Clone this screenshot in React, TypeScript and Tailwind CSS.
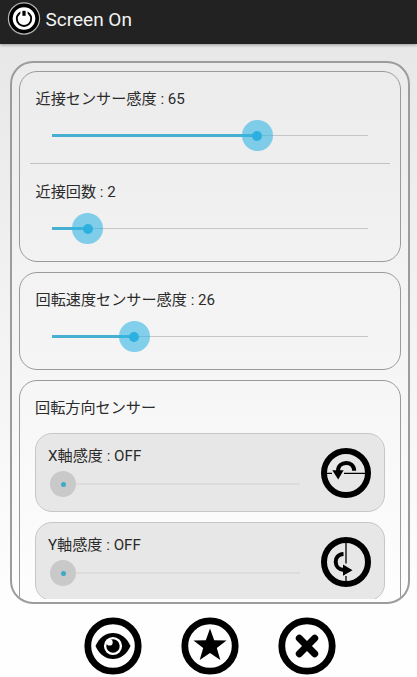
import type { ReactNode } from "react";

const Slider = ({ percent }: { percent: number }) => {
  return (
    <div className="relative ml-[32px] mr-[32px] h-[31px]">
      <div className="absolute top-[15px] h-px w-full bg-[#c6c6c6]" />
      <div
        className="absolute top-[14px] h-[3px] bg-[#45b0d2]"
        style={{ width: `${percent}%` }}
      />
      <div
        className="absolute top-0 -ml-[15.5px] flex h-[31px] w-[31px] items-center justify-center rounded-full bg-[#33b5e5]/60"
        style={{ left: `${percent}%` }}
      >
        <div className="h-[10px] w-[10px] rounded-full bg-[#2cb0e0]" />
      </div>
    </div>
  );
};

const DisabledSlider = () => {
  return (
    <div className="mt-[4px] flex h-[26px] w-[252px] items-center">
      <div className="ml-[2px] flex h-[26px] w-[26px] items-center justify-center rounded-full bg-[#c9c9c9]">
        <div className="h-[5px] w-[5px] rounded-full bg-[#3fa9c6]" />
      </div>
      <div className="h-[2px] flex-1 bg-[#dcdcdc]" />
    </div>
  );
};

const Label = ({ children }: { children: ReactNode }) => {
  return (
    <p className="h-[22px] whitespace-nowrap text-[15.15px] leading-[22px] text-[#2b2b2b]">
      {children}
    </p>
  );
};

const AxisRow = ({ label, icon }: { label: string; icon: ReactNode }) => {
  return (
    <div className="flex h-[79px] shrink-0 items-center justify-between rounded-[17px] border border-[#c6c6c6] bg-[#e7e7e7] pl-[12px] pr-[13px]">
      <div className="h-full pt-[11px]">
        <Label>{label}</Label>
        <DisabledSlider />
      </div>
      {icon}
    </div>
  );
};

const PowerIcon = () => (
  <svg width="34" height="34" viewBox="0 0 34 34" fill="none">
    <circle cx="17" cy="16.5" r="15.6" fill="#000" stroke="#b5b5b5" strokeWidth="1.2" />
    <circle cx="17" cy="16.5" r="11.3" fill="#fff" />
    <circle cx="17" cy="16.8" r="7.2" stroke="#000" strokeWidth="1.9" />
    <rect x="13.4" y="8" width="7.2" height="5.2" fill="#fff" />
    <rect x="15.4" y="8.8" width="3.2" height="5" fill="#000" />
  </svg>
);

const RotateXIcon = () => (
  <svg width="50" height="50" viewBox="0 0 50 50" fill="none" stroke="#000">
    <circle cx="25" cy="25" r="22" strokeWidth="6" />
    <path d="M5 25.3H11M23 25.3H45" strokeWidth="1.3" />
    <path d="M17 23C17 12.5 33 12 33.2 22.8" strokeWidth="4" />
    <path d="M11.3 22.3H22.6L17.2 31.5Z" fill="#000" stroke="none" />
  </svg>
);

const RotateYIcon = () => (
  <svg width="50" height="50" viewBox="0 0 50 50" fill="none" stroke="#000">
    <circle cx="25" cy="25" r="22" strokeWidth="6" />
    <path d="M25 5V26.5M25 39V45" strokeWidth="1.3" />
    <path d="M22.5 17C11.5 17.5 12.5 32.5 23 33" strokeWidth="4" />
    <path d="M22 27.5V38.8L31.5 33.2Z" fill="#000" stroke="none" />
  </svg>
);

const EyeIcon = () => (
  <svg width="58" height="58" viewBox="0 0 58 58">
    <circle cx="29" cy="29" r="25.2" fill="#fff" stroke="#000" strokeWidth="6.8" />
    <path d="M11.5 29C19 11.7 39 11.7 46.5 29C39 46.3 19 46.3 11.5 29Z" fill="#000" />
    <circle cx="29" cy="29" r="7.9" stroke="#fff" strokeWidth="2.4" />
    <circle cx="25.6" cy="25.4" r="3.1" fill="#fff" />
  </svg>
);

const StarIcon = () => (
  <svg width="58" height="58" viewBox="0 0 58 58">
    <circle cx="29" cy="29" r="25.2" fill="#fff" stroke="#000" strokeWidth="6.8" />
    <path
      d="M29 11.5L33.2 23.2L45.5 23.5L35.8 31.1L39.3 43L29 35.9L18.7 43L22.2 31.1L12.5 23.5L24.8 23.2Z"
      fill="#000"
    />
  </svg>
);

const CloseIcon = () => (
  <svg width="58" height="58" viewBox="0 0 58 58">
    <circle cx="29" cy="29" r="25.2" fill="#fff" stroke="#000" strokeWidth="6.8" />
    <path
      d="M21.3 21.3L36.7 36.7M36.7 21.3L21.3 36.7"
      stroke="#000"
      strokeWidth="7"
      strokeLinecap="round"
    />
  </svg>
);

const App = () => {
  return (
    <div className="flex h-[677px] w-[417px] flex-col overflow-hidden bg-linear-to-b from-[#e6e6e6] to-[#fefefe] to-90% font-[Roboto,'Noto_Sans_CJK_JP',sans-serif]">
      <header className="flex h-[44px] shrink-0 bg-[#222222] pl-[7px] pt-[2px] shadow-[0_1px_3px_rgba(0,0,0,0.35)]">
        <PowerIcon />
        <h1 className="ml-[4.5px] mt-[5px] text-[19px] leading-[26px] text-[#f3f3f3]">
          Screen On
        </h1>
      </header>

      <main className="ml-[10px] mt-[17px] flex h-[543px] w-[400px] shrink-0 flex-col gap-[10px] overflow-hidden rounded-[23px] border-2 border-[#9c9c9c] bg-white/15 px-[7px] pt-[8px]">
        <section className="h-[191px] shrink-0 rounded-[18px] border border-[#9a9a9a] pt-[16px]">
          <div className="pl-[15.5px]">
            <Label>近接センサー感度 : 65</Label>
          </div>
          <div className="mt-[10px]">
            <Slider percent={65} />
          </div>
          <hr className="mx-[10px] mt-[12px] border-[#c2c2c2]" />
          <div className="mt-[17px] pl-[15.5px]">
            <Label>近接回数 : 2</Label>
          </div>
          <div className="mt-[10px]">
            <Slider percent={11.3} />
          </div>
        </section>

        <section className="h-[98px] shrink-0 rounded-[18px] border border-[#9a9a9a] pt-[16px]">
          <div className="pl-[15.5px]">
            <Label>回転速度センサー感度 : 26</Label>
          </div>
          <div className="mt-[10px]">
            <Slider percent={26} />
          </div>
        </section>

        <section className="h-[330px] shrink-0 rounded-[18px] border border-[#9a9a9a] px-[15px] pt-[16px]">
          <Label>回転方向センサー</Label>
          <div className="mt-[14px] flex h-[166px] flex-col gap-[10px] overflow-hidden">
            <AxisRow label="X軸感度 : OFF" icon={<RotateXIcon />} />
            <AxisRow label="Y軸感度 : OFF" icon={<RotateYIcon />} />
          </div>
        </section>
      </main>

      <footer className="mt-[13px] flex justify-center gap-[39px] pl-[3px]">
        <button>
          <EyeIcon />
        </button>
        <button>
          <StarIcon />
        </button>
        <button>
          <CloseIcon />
        </button>
      </footer>
    </div>
  );
};

export default App;
